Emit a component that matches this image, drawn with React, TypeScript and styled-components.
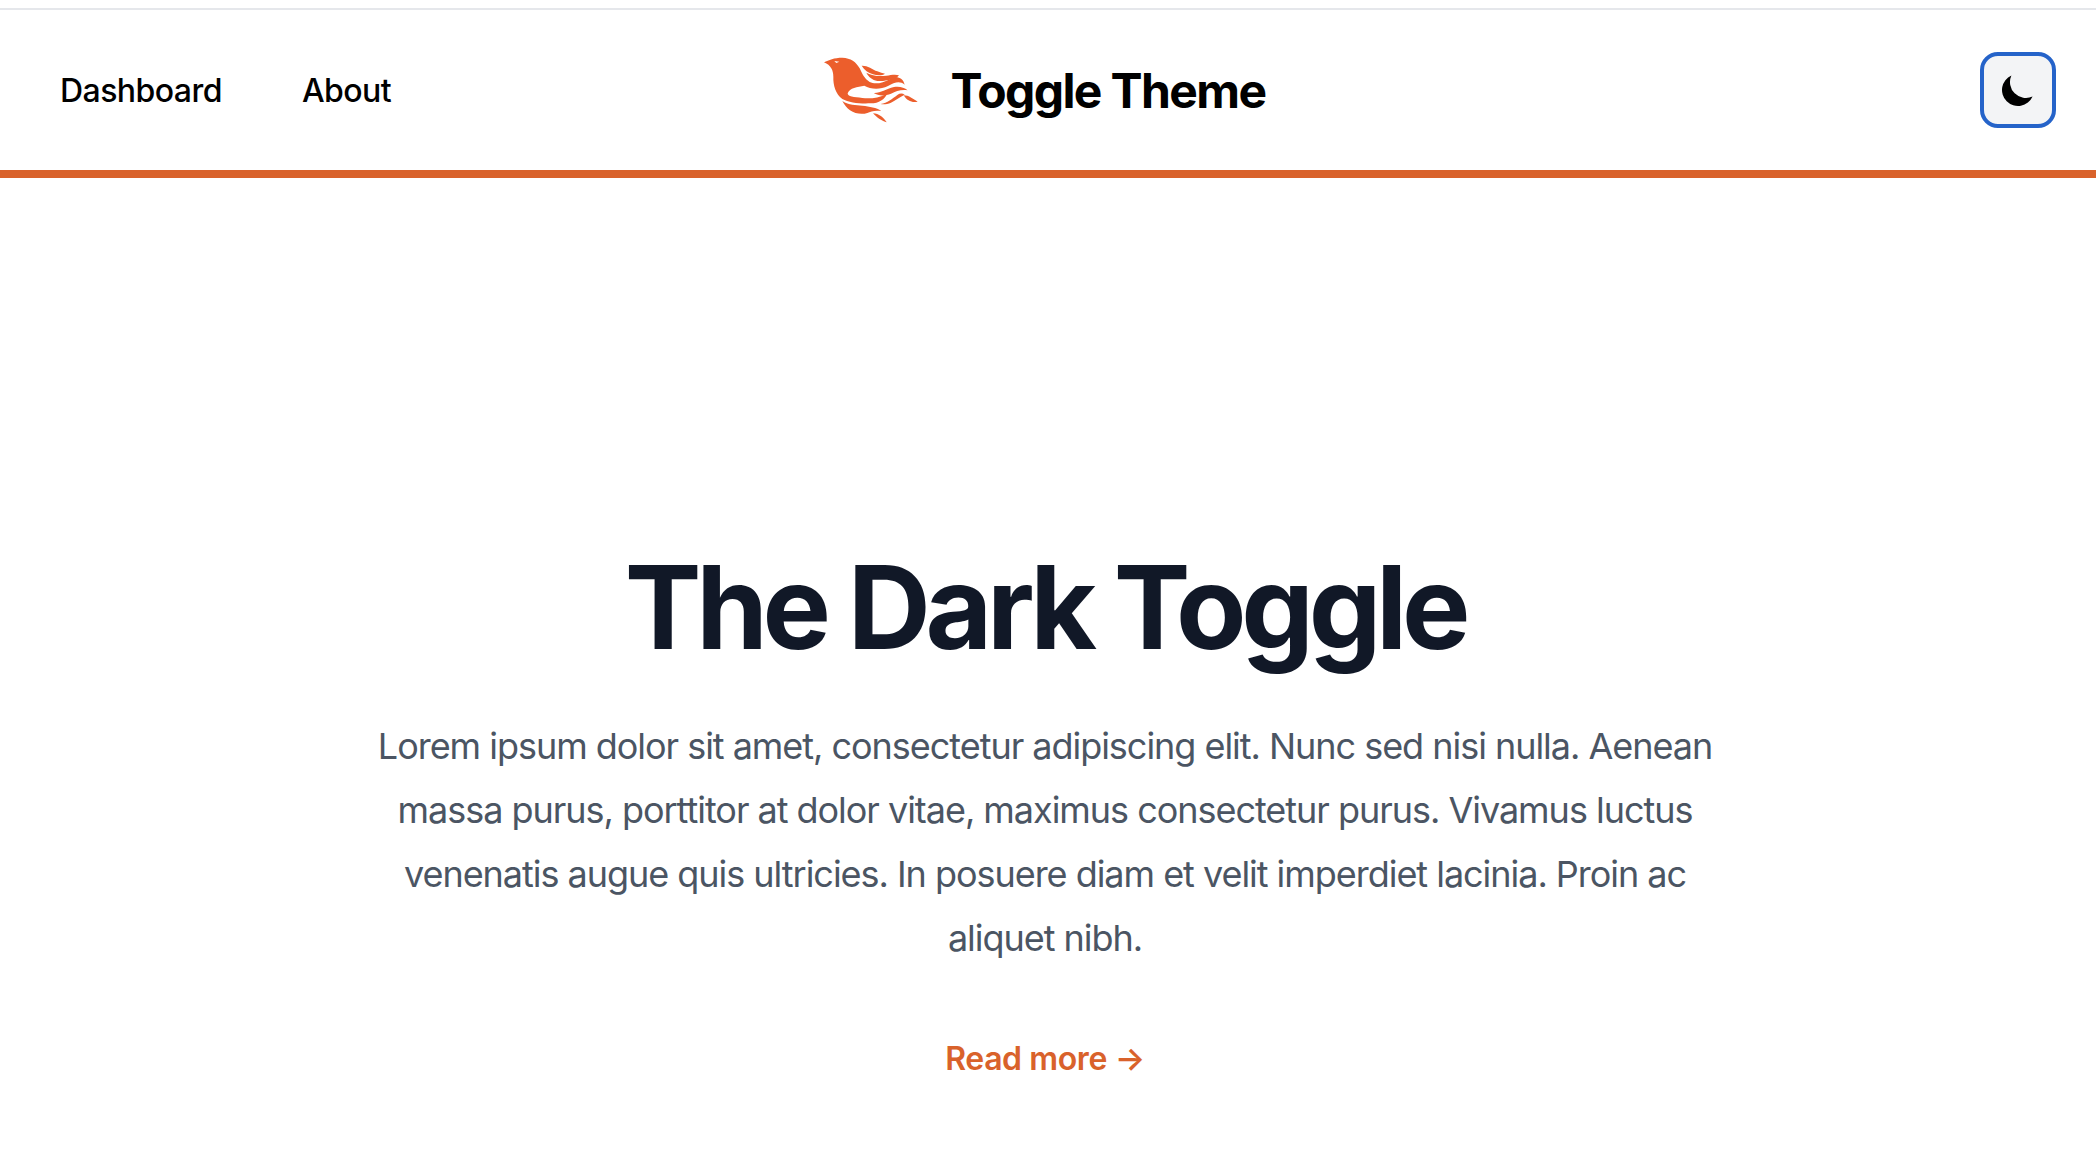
import React from "react";
import styled, { createGlobalStyle } from "styled-components";

const Global = createGlobalStyle`
  html, body { margin: 0; padding: 0; background: #fff; }
  body { font-family: Inter, "Liberation Sans", sans-serif; }
`;

const Page = styled.div`
  padding-top: 8px;
  min-height: 1160px;
  overflow: hidden;
`;

const Header = styled.header`
  display: grid;
  grid-template-columns: 1fr auto 1fr;
  align-items: center;
  height: 160px;
  padding: 0 40px 0 60px;
  border-top: 2px solid #e5e7eb;
  border-bottom: 8px solid #d9622b;
`;

const Nav = styled.nav`
  display: flex;
  gap: 80px;
`;

const NavLink = styled.a`
  font-size: 32px;
  font-weight: 500;
  letter-spacing: -0.55px;
  color: #000;
  text-decoration: none;
`;

const Brand = styled.a`
  display: flex;
  align-items: center;
  margin-right: 51px;
  font-size: 48px;
  font-weight: 700;
  letter-spacing: -1.6px;
  color: #000;
`;

const Logo = styled.svg`
  width: 140px;
  height: 110px;
  margin: -10px 11px 0 0;
  flex: none;
`;

const ThemeSlot = styled.div`
  display: flex;
  justify-content: flex-end;
`;

const ThemeButton = styled.button`
  width: 76px;
  height: 76px;
  box-sizing: border-box;
  display: flex;
  align-items: center;
  justify-content: center;
  padding: 0;
  background: #f3f4f6;
  border: 4px solid #2563c9;
  border-radius: 18px;
`;

const Main = styled.main`
  display: flex;
  flex-direction: column;
  align-items: center;
  padding: 374px 6px 0 0;
  text-align: center;
`;

const Title = styled.h1`
  margin: 0;
  font-size: 115px;
  line-height: 112px;
  font-weight: 700;
  letter-spacing: -5.3px;
  color: #111827;
`;

const Lead = styled.p`
  width: 1344px;
  margin: 50px 0 0;
  font-size: 36px;
  line-height: 64px;
  letter-spacing: -1.03px;
  color: #4b5563;
`;

const ReadMore = styled.a`
  margin-top: 65px;
  font-size: 32px;
  line-height: 48px;
  font-weight: 600;
  letter-spacing: -0.4px;
  color: #d9622b;
`;

export default function App() {
  return (
    <Page>
      <Global />
      <Header>
        <Nav>
          <NavLink>Dashboard</NavLink>
          <NavLink>About</NavLink>
        </Nav>
        <Brand>
          <Logo viewBox="0 0 420 330" fill="#ec5e2c">
            <path d="M75 97 C90 90 105 83 130 83 C155 84 172 96 182 115 C190 132 196 146 212 156 C228 164 250 160 275 146 C292 137 312 142 317 164 C302 152 287 157 267 168 C242 180 215 178 196 167 C175 172 152 172 146 190 C145 200 165 201 190 204 C212 206 238 205 264 191 C258 207 240 220 215 220 C185 222 150 218 130 207 C110 192 102 165 103 140 C103 122 96 105 75 97Z" />
            <path d="M188 107 C205 106 220 118 235 124 C243 127 251 130 258 131 C250 137 235 137 222 133 C208 129 196 120 188 107Z" />
            <path d="M202 128 C220 138 240 140 262 137 C275 135 290 132 300 136 L290 146 C270 148 250 155 235 153 C220 150 208 140 202 128Z" />
            <path d="M224 189 C245 190 260 177 285 171 C300 168 316 172 326 181 C306 178 291 184 276 191 C258 198 240 199 224 189Z" />
            <path d="M245 222 C265 219 280 206 295 195 C302 190 310 189 317 194 C301 201 291 211 276 218 C265 222 255 224 245 222Z" />
            <path d="M314 196 C330 196 342 207 356 215 C340 219 324 213 314 196Z" />
            <path d="M130 213 C150 226 170 225 190 227 C212 230 232 232 247 243 C228 240 215 244 205 249 C190 254 168 252 153 241 C144 234 136 224 130 213Z" />
            <path d="M222 250 C240 251 253 262 263 277 C250 274 233 263 222 250Z" />
            <path d="M106 93 L121 95 L112 99Z" fill="#fff" />
          </Logo>
          Toggle Theme
        </Brand>
        <ThemeSlot>
          <ThemeButton aria-label="Toggle theme">
            <svg width="40" height="40" viewBox="0 0 20 20" fill="#000">
              <path d="M17.293 13.293A8 8 0 016.707 2.707a8.001 8.001 0 1010.586 10.586z" />
            </svg>
          </ThemeButton>
        </ThemeSlot>
      </Header>
      <Main>
        <Title>The Dark Toggle</Title>
        <Lead>
          Lorem ipsum dolor sit amet, consectetur adipiscing elit. Nunc sed nisi nulla. Aenean massa purus, porttitor at dolor vitae, maximus consectetur purus. Vivamus luctus venenatis augue quis ultricies. In posuere diam et velit imperdiet lacinia. Proin ac aliquet nibh.
        </Lead>
        <ReadMore>Read more →</ReadMore>
      </Main>
    </Page>
  );
}
